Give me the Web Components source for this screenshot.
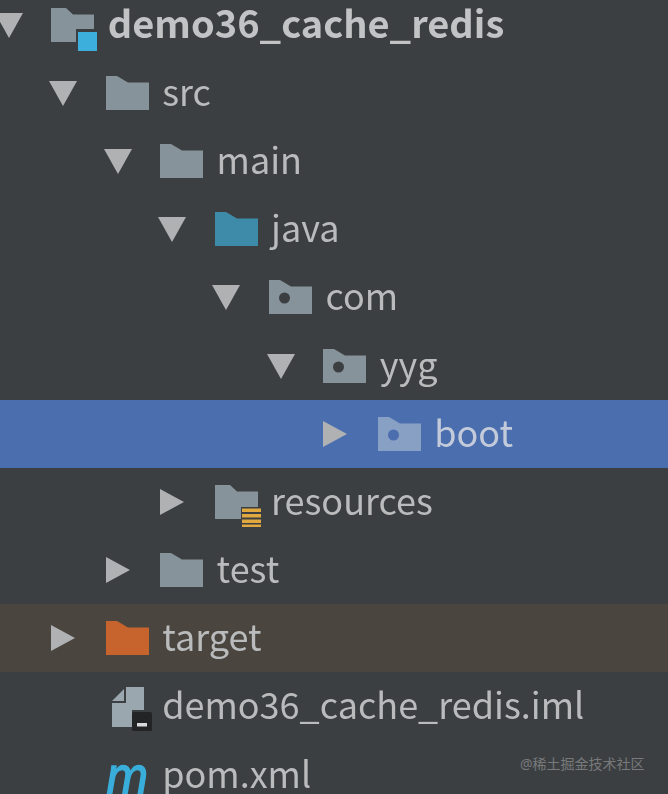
<!DOCTYPE html>
<html lang="zh-CN">
<head>
<meta charset="UTF-8">
<title>Project tree</title>
<style>
    html, body { margin: 0; height: 100%; background: #3c3f41; overflow: hidden; }
</style>
</head>
<body>
<template id="tree-icon-tpl">
    <style>
        :host { display: block; width: 48px; height: 48px; flex: none; position: relative; }
        svg { display: block; width: 48px; height: 48px; overflow: visible; filter: blur(.4px); }
        .m {
            position: absolute; left: 0; top: 2px;
            font: italic 400 60px/48px "Liberation Sans", sans-serif;
            color: #3aaedb; transform: scaleX(.84); transform-origin: 0 50%;
            -webkit-text-stroke: 1.5px #3aaedb;
        }
    </style>
    <div id="box"></div>
</template>
<template id="tree-row-tpl">
    <style>
        :host {
            display: flex; align-items: center; height: 68.2px;
            color: #b9bbbc; font: 400 36px/40px "Noto Sans CJK JP", "Noto Sans", sans-serif;
        }
        :host([tone="selected"]) { background: #4b6eaf; color: #c3cbdb; }
        :host([tone="excluded"]) { background: #4a463f; }
        :host([strong]) { font-size: 38px; font-weight: 700; color: #c2c3c4; }
        .arrow {
            width: 28px; height: 28px; flex: none; margin-right: 28.500px;
            margin-left: calc(var(--depth, 0) * 54.4px - 5.200px);
        }
        .arrow svg { display: block; width: 28px; height: 28px; filter: blur(.4px); }
        .arrow.none { visibility: hidden; }
        ::slotted(tree-icon) { margin-right: 8.500px; }
        .label { white-space: nowrap; filter: blur(.4px); padding-bottom: 6px; }
    </style>
    <div class="arrow" id="arrow"></div>
    <slot name="icon"></slot>
    <span class="label"><slot></slot></span>
</template>
<template id="watermark-tpl">
    <style>
        :host {
            position: absolute; left: 520px; top: 754px;
            font: 400 14px/20px "Noto Sans", "Noto Sans CJK SC", sans-serif;
            color: #77797b; white-space: nowrap;
        }
    </style>
    <slot></slot>
</template>

<project-tree>
    <tree-row depth="0" arrow="down" strong><tree-icon slot="icon" kind="module"></tree-icon>demo36_cache_redis</tree-row>
    <tree-row depth="1" arrow="down"><tree-icon slot="icon" kind="folder"></tree-icon>src</tree-row>
    <tree-row depth="2" arrow="down"><tree-icon slot="icon" kind="folder"></tree-icon>main</tree-row>
    <tree-row depth="3" arrow="down"><tree-icon slot="icon" kind="source"></tree-icon>java</tree-row>
    <tree-row depth="4" arrow="down"><tree-icon slot="icon" kind="package"></tree-icon>com</tree-row>
    <tree-row depth="5" arrow="down"><tree-icon slot="icon" kind="package"></tree-icon>yyg</tree-row>
    <tree-row depth="6" arrow="right" tone="selected"><tree-icon slot="icon" kind="package-selected"></tree-icon>boot</tree-row>
    <tree-row depth="3" arrow="right"><tree-icon slot="icon" kind="resources"></tree-icon>resources</tree-row>
    <tree-row depth="2" arrow="right"><tree-icon slot="icon" kind="folder"></tree-icon>test</tree-row>
    <tree-row depth="1" arrow="right" tone="excluded"><tree-icon slot="icon" kind="excluded"></tree-icon>target</tree-row>
    <tree-row depth="1"><tree-icon slot="icon" kind="iml"></tree-icon>demo36_cache_redis.iml</tree-row>
    <tree-row depth="1"><tree-icon slot="icon" kind="maven"></tree-icon>pom.xml</tree-row>
</project-tree>
<water-mark>@稀土掘金技术社区</water-mark>

<script>
    const shadow = (el, id) => {
        el.attachShadow({mode: 'open'});
        el.shadowRoot.append(document.getElementById(id).content.cloneNode(true));
    };

    const folder = (fill) => `<path d="M0 7H11L22 13.500H43V41H0Z" fill="${fill}"/>`;
    const dot = (fill) => `<circle cx="15.500" cy="25" r="5.500" fill="${fill}"/>`;
    const svg = (body) => `<svg viewBox="0 0 48 48">${body}</svg>`;

    const ICONS = {
        folder: svg(folder('#87939a')),
        source: svg(folder('#3d8ba9')),
        excluded: svg(folder('#c7632c')),
        package: svg(folder('#87939a') + dot('#3c3f41')),
        'package-selected': svg(folder('#87a0c4') + dot('#4b6eaf')),
        module: svg(`<path d="M0 7H15L22 13.500H43V28H25V41H0Z" fill="#87939a"/><rect x="27" y="31" width="19" height="19" fill="#3cafdc"/>`),
        resources: svg(`<path d="M0 7H15L22 13.500H43V29H26V41H0Z" fill="#87939a"/>
            <g fill="#e0a83e"><rect x="27" y="30.500" width="19" height="3.500"/><rect x="27" y="36" width="19" height="3.500"/><rect x="27" y="41.500" width="19" height="3.500"/><rect x="27" y="46.500" width="19" height="2.500"/></g>`),
        iml: svg(`<path d="M6 19L18 7V19Z" fill="#9aa7af"/><path d="M20 5H38V28H26V45H6V21H20Z" fill="#9aa7af"/>
            <rect x="26" y="30" width="20" height="19" rx="1.500" fill="#222425"/><rect x="31" y="41" width="10" height="3.500" fill="#d8dadb"/>`)
    };

    customElements.define('tree-icon', class extends HTMLElement {
        connectedCallback() {
            shadow(this, 'tree-icon-tpl');
            const box = this.shadowRoot.getElementById('box');
            const kind = this.getAttribute('kind');
            if (kind === 'maven') box.innerHTML = '<span class="m">m</span>';
            else box.innerHTML = ICONS[kind];
        }
    });

    customElements.define('tree-row', class extends HTMLElement {
        connectedCallback() {
            shadow(this, 'tree-row-tpl');
            this.style.setProperty('--depth', this.getAttribute('depth'));
            const arrow = this.shadowRoot.getElementById('arrow');
            const dir = this.getAttribute('arrow');
            if (dir === 'down') arrow.innerHTML = '<svg viewBox="0 0 28 28"><path d="M0 2H28L14 27Z" fill="#afb1b3"/></svg>';
            else if (dir === 'right') arrow.innerHTML = '<svg viewBox="0 0 28 28"><path d="M2 1L26 14L2 27Z" fill="#afb1b3"/></svg>';
            else arrow.classList.add('none');
        }
    });

    customElements.define('project-tree', class extends HTMLElement {
        connectedCallback() {
            this.attachShadow({mode: 'open'});
            this.shadowRoot.innerHTML = `<style>:host { display: block; margin-top: -9.500px; }</style><slot></slot>`;
        }
    });

    customElements.define('water-mark', class extends HTMLElement {
        connectedCallback() { shadow(this, 'watermark-tpl'); }
    });
</script>
</body>
</html>
